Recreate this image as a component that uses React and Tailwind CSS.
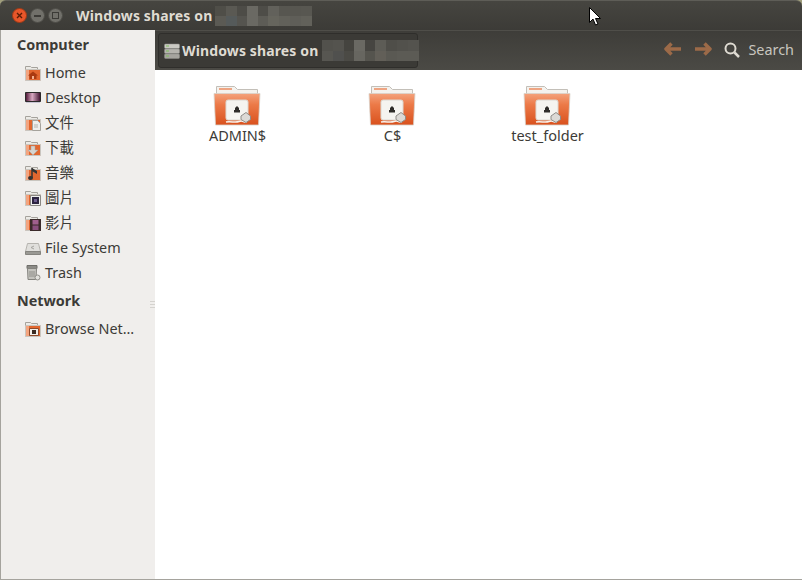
const FONT = "font-['Noto_Sans','Noto_Sans_CJK_TC',sans-serif]";

// pixelated hostname blur, two rows of blocks
const BLUR_WIDTHS = [11, 11, 10, 11, 10, 11, 11, 11, 11];
const TITLE_BLUR = [
  ['#4f4e48', '#5a5953', '#4d4c47', '#6a6963', '#4e4d48', '#62615b', '#575650', '#575650', '#585751'],
  ['#5b5a54', '#555a5a', '#55544f', '#6a6963', '#5d5c56', '#66655d', '#62615a', '#5f5e58', '#62615a'],
];
const PATH_BLUR = [
  ['#52514c', '#54534e', '#45443f', '#6a6963', '#464541', '#5d5c56', '#4f4e49', '#52514c', '#54534e'],
  ['#575651', '#50504e', '#4b4a45', '#676660', '#55544e', '#625f58', '#5a5953', '#5c5b55', '#5c5b55'],
];

function Blur({ rows, className }) {
  return (
    <div className={`flex flex-col ${className}`}>
      {rows.map((row, r) => (
        <div key={r} className="flex flex-1">
          {row.map((c, i) => (
            <div key={i} style={{ width: BLUR_WIDTHS[i], background: c }} />
          ))}
        </div>
      ))}
    </div>
  );
}

function SmallFolder({ children }) {
  return (
    <svg width="16" height="16" viewBox="0 0 16 16" className="shrink-0">
      <path d="M.5 1.500h5l1 1h6v3H.5z" fill="#eceae6" stroke="#a5a29c" />
      <path d="M.5 4.500h15v11H.5z" fill="#e2672f" stroke="#c9c5bf" />
      <path d="M1 5h3v10H1z" fill="#f3a47f" />
      {children}
    </svg>
  );
}

const PLACES = [
  {
    label: 'Home',
    icon: (
      <SmallFolder>
        <path d="M3 10.500l5-4 5 4h-1.500V14h-7v-3.500z" fill="#a93a10" />
        <path d="M7 11h2v3H7z" fill="#f2b08e" />
      </SmallFolder>
    ),
  },
  {
    label: 'Desktop',
    icon: (
      <svg width="16" height="16" viewBox="0 0 16 16" className="shrink-0">
        <defs>
          <linearGradient id="dk" x1="0" x2="1">
            <stop offset="0" stopColor="#4a1030" />
            <stop offset="0.45" stopColor="#d9a9c2" />
            <stop offset="1" stopColor="#3a0d2a" />
          </linearGradient>
        </defs>
        <path d="M.5 2.500h15v9H.5z" fill="url(#dk)" stroke="#2c2a2a" />
        <path d="M1 12h14v1H1z" fill="#c9c5d4" />
      </svg>
    ),
  },
  {
    label: '文件',
    icon: (
      <SmallFolder>
        <path d="M7.500 5.500h5l3 3v7h-8z" fill="#eeeeec" stroke="#a5a29c" />
        <path d="M9 10h4M9 12h4" stroke="#b5b2ad" />
      </SmallFolder>
    ),
  },
  {
    label: '下載',
    icon: (
      <SmallFolder>
        <path d="M6 6h4v4h3l-5 5-5-5h3z" fill="#d6d4cf" stroke="#a5a29c" strokeWidth=".5" />
      </SmallFolder>
    ),
  },
  {
    label: '音樂',
    icon: (
      <SmallFolder>
        <path d="M7 3v10" stroke="#333" strokeWidth="1.500" />
        <path d="M7 3l5 3v3L7 6z" fill="#333" />
        <ellipse cx="5.500" cy="13" rx="2.500" ry="2" fill="#333" />
      </SmallFolder>
    ),
  },
  {
    label: '圖片',
    icon: (
      <SmallFolder>
        <path d="M5.500 5.500h10v10h-10z" fill="#eeeeec" stroke="#8a8782" />
        <path d="M7 7h7v7H7z" fill="#2c2440" />
        <path d="M9 9h3v3H9z" fill="#6c5c8c" />
      </SmallFolder>
    ),
  },
  {
    label: '影片',
    icon: (
      <SmallFolder>
        <path d="M5 4h11v12H5z" fill="#3b2a2a" />
        <path d="M7.500 5h6v4.500h-6z" fill="#a0608e" />
        <path d="M7.500 10.500h6V15h-6z" fill="#8a4f7e" />
      </SmallFolder>
    ),
  },
  {
    label: 'File System',
    icon: (
      <svg width="16" height="16" viewBox="0 0 16 16" className="shrink-0">
        <path d="M2.500 3.500h11l2 8H.5z" fill="#e0dfdc" stroke="#b5b3ae" />
        <path d="M.5 11.500h15v3H.5z" fill="#9a9994" stroke="#85847f" />
        <path d="M9 6L6 7.500 9 9" stroke="#a5a39f" fill="none" />
      </svg>
    ),
  },
  {
    label: 'Trash',
    icon: (
      <svg width="16" height="17" viewBox="0 0 16 17" className="shrink-0">
        <path d="M2 1.500h10v3H2z" fill="#8c8b87" stroke="#6f6e6a" />
        <path d="M2.500 4.500h9l-.5 11H3z" fill="#c4c3be" stroke="#85847f" />
        <path d="M5 7v6M7 7v6M9 7v6" stroke="#8f8e89" />
        <circle cx="12.500" cy="13.500" r="2.500" fill="#e2e1dd" stroke="#8f8e89" />
      </svg>
    ),
  },
];

function Place({ label, icon }) {
  return (
    <div className="h-[25px] flex items-center pl-6 gap-1 text-[14.400px] text-[#3c3b37] whitespace-nowrap">
      <span className="w-4 flex justify-center">{icon}</span>
      <span>{label}</span>
    </div>
  );
}

function ShareFolder({ id }) {
  return (
    <svg width="48" height="42" viewBox="0 0 48 42" className="mr-[2px]">
      <defs>
        <linearGradient id={`f${id}`} x1="0" x2="0" y1="0" y2="1">
          <stop offset="0" stopColor="#f4a27c" />
          <stop offset="0.35" stopColor="#ec7a48" />
          <stop offset="1" stopColor="#d9511d" />
        </linearGradient>
      </defs>
      <path d="M3.500 1.500h18l3 3h20v6h-41z" fill="#f4f2ee" stroke="#c3bfb8" />
      <path d="M6 4h13" stroke="#eea583" strokeWidth="2" />
      <path d="M1 8.500h46l-1.500 31.500h-43z" fill={`url(#f${id})`} stroke="#d8d3cb" strokeWidth=".8" />
      <rect x="13" y="15" width="22" height="20" rx="2" fill="#f5f4f0" stroke="#dcd8d1" />
      <path d="M22 25v-2l2-2 2 2v2h1v2.500h-6V25z" fill="#2e2c29" />
      <path d="M13 37c5-1 9 1 13-.5s4 1 8 .5" stroke="#f7f4ef" strokeWidth="1.500" fill="none" />
      <path d="M28 31l5-3.500 4.500 3.500v3.500l-4.500 3-5-3z" fill="#dcdad6" stroke="#8f8d88" />
    </svg>
  );
}

function Share({ id, name }) {
  return (
    <div className="w-[155px] flex flex-col items-center">
      <ShareFolder id={id} />
      <div className="-mt-px text-[14.500px] leading-[18px] text-[#3c3b37]">{name}</div>
    </div>
  );
}

function ArrowIcon({ flip }) {
  return (
    <svg width="18" height="14" viewBox="0 0 18 14" className={flip ? '-scale-x-100' : ''}>
      <path d="M7.500 1.500L2 7l5.500 5.500M3 7h14" stroke="#9c6a48" strokeWidth="3.500" fill="none" strokeLinejoin="round" />
    </svg>
  );
}

export default function App() {
  return (
    <div className={`${FONT} relative w-[802px] h-[580px] flex flex-col overflow-hidden bg-[#a09e7c]`}>
      {/* title bar */}
      <div className="h-[30px] shrink-0 rounded-t-[6px] border-t border-[#5e5d57] bg-gradient-to-b from-[#464540] to-[#3c3b37] flex items-center pl-3">
        <div className="flex items-center gap-[3px]">
          <div className="w-[15px] h-[15px] rounded-full bg-[#e8562a] border border-[#a03a15] text-[#5b1d06] flex items-center justify-center">
            <svg width="7" height="7" viewBox="0 0 7 7"><path d="M1 1l5 5M6 1L1 6" stroke="currentColor" strokeWidth="1.400" /></svg>
          </div>
          <div className="w-[15px] h-[15px] rounded-full bg-[#71706a] border border-[#4d4c47] flex items-center justify-center">
            <div className="w-[7px] h-[2px] bg-[#3c3b37]" />
          </div>
          <div className="w-[15px] h-[15px] rounded-full bg-[#71706a] border border-[#4d4c47] flex items-center justify-center">
            <div className="w-[7px] h-[7px] border border-[#3c3b37]" />
          </div>
        </div>
        <div className="ml-[13px] text-[14px] tracking-[0.13px] font-bold text-[#dfdbd2] whitespace-nowrap">Windows shares on</div>
        <Blur rows={TITLE_BLUR} className="h-5 ml-[3px]" />
        <svg width="13" height="19" viewBox="0 0 13 19" className="absolute left-[589px] top-[7px]">
          <path d="M.5.500v15l3.500-3.500 2.500 6 2.500-1-2.500-5.500h5z" fill="#fff" stroke="#000" />
        </svg>
      </div>

      <div className="flex-1 flex min-h-0 bg-white border-b border-[#a5a39d]">
        {/* sidebar */}
        <aside className="w-[155px] shrink-0 border-l border-[#a5a39d] bg-[#f0eeec] relative">
          <div className="h-[30px] pl-4 flex items-center text-[14.400px] font-bold text-[#3c3b37]">Computer</div>
          {PLACES.map(p => <Place key={p.label} {...p} />)}
          <div className="h-[31px] pl-4 flex items-center text-[14.400px] font-bold text-[#3c3b37]">Network</div>
          <Place
            label="Browse Net…"
            icon={
              <SmallFolder>
                <path d="M4.500 7.500h9v7h-9z" fill="#f2efea" stroke="#8f4a2a" />
                <path d="M7 9h4v4H7z" fill="#3a2a22" />
              </SmallFolder>
            }
          />
          <div className="absolute right-0 top-[271px] w-[5px] flex flex-col gap-[2px]">
            <div className="h-px bg-[#d5d3cf]" />
            <div className="h-px bg-[#d5d3cf]" />
            <div className="h-px bg-[#d5d3cf]" />
          </div>
        </aside>

        <div className="flex-1 flex flex-col min-w-0">
          {/* toolbar */}
          <div className="h-[40px] shrink-0 border-t border-[#4f4e49] bg-gradient-to-b from-[#3e3d39] to-[#4b4a45] flex items-center pl-[3px] pr-[8px]">
            <div className="h-[35px] w-[260px] rounded-[3px] border border-[#2f2e2b] bg-[#3b3a36] flex items-center pl-[5px]">
              <svg width="16" height="16" viewBox="0 0 16 16" className="shrink-0">
                <rect x="0.500" y="1" width="15" height="4.500" rx="1" fill="#c9c8c2" stroke="#8f8e88" strokeWidth=".5" />
                <rect x="0.500" y="6" width="15" height="4.500" rx="1" fill="#b5b4ae" stroke="#8f8e88" strokeWidth=".5" />
                <rect x="0.500" y="11" width="15" height="4.500" rx="1" fill="#a5a49e" stroke="#8f8e88" strokeWidth=".5" />
                <path d="M2 3h3M2 8h3M2 13h3" stroke="#7fbf5a" />
              </svg>
              <span className="ml-[2px] text-[14px] tracking-[0.13px] font-bold text-[#dfdbd2] whitespace-nowrap">Windows shares on</span>
              <Blur rows={PATH_BLUR} className="h-[21px] ml-[4px]" />
            </div>
            <div className="ml-auto mb-[3px] flex items-center gap-3">
              <ArrowIcon />
              <ArrowIcon flip />
            </div>
            <svg width="16" height="16" viewBox="0 0 16 16" className="ml-[12px] mb-[2px] text-[#dfdbd2]">
              <circle cx="6.500" cy="6.500" r="5" stroke="currentColor" strokeWidth="2" fill="none" />
              <path d="M10.500 10.500l4.500 4.500" stroke="currentColor" strokeWidth="2.500" />
            </svg>
            <span className="ml-[8px] mb-[2px] text-[14.400px] text-[#c8c6bf]">Search</span>
          </div>

          <main className="flex-1 bg-white flex items-start pl-[5px] pt-[15px]">
            <Share id="a" name="ADMIN$" />
            <Share id="b" name="C$" />
            <Share id="c" name="test_folder" />
          </main>
        </div>
      </div>
    </div>
  );
}
